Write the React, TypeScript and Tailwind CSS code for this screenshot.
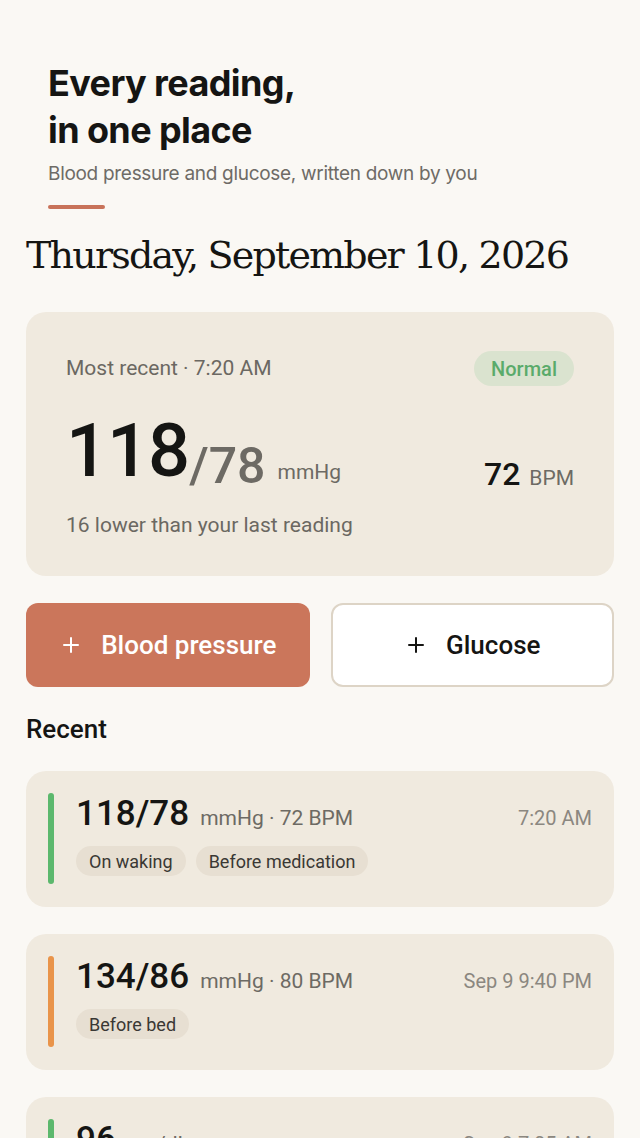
import { Plus } from "lucide-react";

type Reading = {
    id: number;
    value: string;
    unit: string;
    time: string;
    tags: string[];
    tone: "green" | "orange";
};

const readings: Reading[] = [
    { id: 1, value: "118/78", unit: "mmHg · 72 BPM", time: "7:20 AM", tags: ["On waking", "Before medication"], tone: "green" },
    { id: 2, value: "134/86", unit: "mmHg · 80 BPM", time: "Sep 9 9:40 PM", tags: ["Before bed"], tone: "orange" },
    { id: 3, value: "96", unit: "mg/dL", time: "Sep 9 7:05 AM", tags: ["Fasting"], tone: "green" },
];

const sans = { fontFamily: "Roboto, 'Noto Sans', sans-serif" };

export default function App() {
    return (
        <div className="h-screen bg-[#faf8f4] text-[#1a1a18] overflow-hidden" style={sans}>
            <div className="px-[48px] pt-[60px]">
                <h1 className="text-[36px] leading-[47px] font-bold tracking-[-0.6px] text-[#151513] font-['Inter',sans-serif]">
                    Every reading,
                    <br />
                    in one place
                </h1>
                <p className="mt-[7px] text-[19px] leading-[26px] text-[#6e6b66] tracking-[-0.3px] font-['Inter',sans-serif]">
                    Blood pressure and glucose, written down by you
                </p>
                <div className="mt-[18px] h-[4px] w-[57px] rounded-full bg-[#c8735a]" />
            </div>

            <div className="px-[26px]">
                <h2 className="mt-[20px] text-[38px] leading-[52px] whitespace-nowrap text-[#151513] font-['DejaVu_Serif',serif] tracking-[-1.8px]">
                    Thursday, September 10, 2026
                </h2>

                <div className="mt-[31px] rounded-[20px] bg-[#f0eadf] px-[40px] pt-[39px] pb-[37px]">
                    <div className="flex items-center justify-between">
                        <span className="text-[21px] text-[#6b6862]">Most recent · 7:20 AM</span>
                        <span className="rounded-full bg-[#dae3cf] px-[17px] h-[35px] flex items-center text-[20px] font-medium text-[#5aab6b]">
                            Normal
                        </span>
                    </div>
                    <div className="mt-[28px] flex items-baseline justify-between">
                        <div className="flex items-baseline">
                            <span className="text-[74px] leading-[74px] font-medium tracking-[-1px] text-[#151513]">118</span>
                            <span className="translate-y-[7px] text-[50px] leading-[50px] font-medium text-[#6d6a64]">/78</span>
                            <span className="ml-[12px] translate-y-[3px] text-[21px] text-[#6d6a64]">mmHg</span>
                        </div>
                        <div className="flex items-baseline translate-y-[9px]">
                            <span className="text-[32px] font-medium text-[#151513]">72</span>
                            <span className="ml-[9px] text-[21px] text-[#6d6a64]">BPM</span>
                        </div>
                    </div>
                    <p className="mt-[22px] text-[21px] leading-[28px] text-[#6b6862]">16 lower than your last reading</p>
                </div>

                <div className="mt-[27px] grid grid-cols-2 gap-[21px]">
                    <button className="h-[84px] rounded-[12px] bg-[#cb765b] text-white flex items-center justify-center gap-[18px] text-[26px] font-medium">
                        <Plus size={24} strokeWidth={2} />
                        Blood pressure
                    </button>
                    <button className="h-[84px] rounded-[12px] bg-white border-2 border-[#ddd4c6] text-[#151513] flex items-center justify-center gap-[18px] text-[26px] font-medium">
                        <Plus size={24} strokeWidth={2} />
                        Glucose
                    </button>
                </div>

                <h3 className="mt-[26px] text-[26px] leading-[32px] font-medium text-[#151513]">Recent</h3>

                <div className="mt-[26px] flex flex-col gap-[27px]">
                    {readings.map((r) => (
                        <div key={r.id} className="rounded-[20px] bg-[#f0eadf] px-[22px] pt-[22px] pb-[23px] flex gap-[22px]">
                            <div className={`w-[6px] shrink-0 rounded-full ${r.tone === "green" ? "bg-[#5cb86d]" : "bg-[#e9944a]"}`} />
                            <div className="flex-1 min-w-0 pb-[8px]">
                                <div className="flex items-baseline justify-between">
                                    <div className="flex items-baseline">
                                        <span className="text-[35px] leading-[42px] font-medium text-[#151513]">{r.value}</span>
                                        <span className="ml-[11px] text-[21px] text-[#6d6a64]">{r.unit}</span>
                                    </div>
                                    <span className="text-[20px] text-[#8b8780]">{r.time}</span>
                                </div>
                                <div className="mt-[11px] flex gap-[10px]">
                                    {r.tags.map((t) => (
                                        <span key={t} className="rounded-full bg-[#e7dfd2] px-[13px] h-[30px] flex items-center text-[18px] text-[#3a3834]">
                                            {t}
                                        </span>
                                    ))}
                                </div>
                            </div>
                        </div>
                    ))}
                </div>
            </div>
        </div>
    );
}
